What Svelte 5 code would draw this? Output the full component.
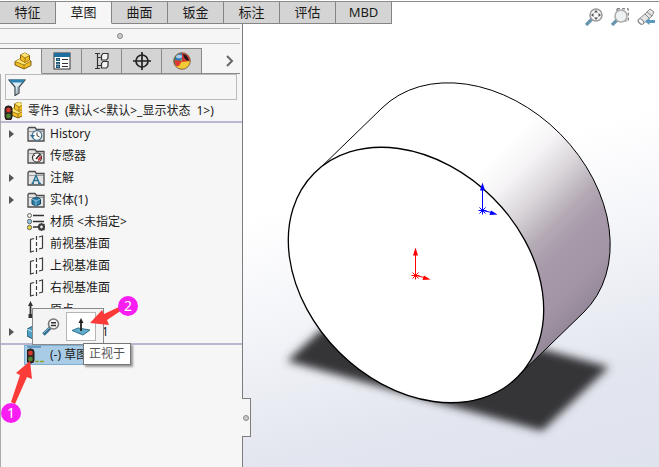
<script lang="ts">
  type Node = { icon: string; label: string; open?: boolean };

  const ribbon = ['特征', '草图', '曲面', '钣金', '标注', '评估', 'MBD'];
  const managers = [
    { id: 'part', title: '设计树' },
    { id: 'props', title: '属性' },
    { id: 'config', title: '配置' },
    { id: 'target', title: '尺寸' },
    { id: 'ball', title: '外观' },
  ];
  const nodes: Node[] = [
    { icon: 'history', label: 'History', open: false },
    { icon: 'sensor', label: '传感器' },
    { icon: 'note', label: '注解', open: false },
    { icon: 'solid', label: '实体(1)', open: false },
    { icon: 'material', label: '材质 <未指定>' },
    { icon: 'plane', label: '前视基准面' },
    { icon: 'plane', label: '上视基准面' },
    { icon: 'plane', label: '右视基准面' },
    { icon: 'origin', label: '原点' },
    { icon: 'boss', label: '凸台-拉伸1', open: false },
  ];

  let activeRibbon = $state('草图');
  let activeManager = $state('part');
  let filter = $state('');
</script>

{#snippet partShape()}
  <path d="M1 9.500 L6.500 6.500 V3 L11 1 L15.500 3.500 V8 L17 9 V13.500 L10 17 L1 13Z" fill="#f0bd25" stroke="#7c5b0c" stroke-linejoin="round" />
  <path d="M6.500 3 L11 1 L15.500 3.500 L11 6Z M1 9.500 L6.500 6.500 V8 L11 10.500 L15.500 8 L17 9 L10 13Z" fill="#ffe573" />
  <path d="M6.500 3 L11 6 L15.500 3.500 M11 6 V10.500 M6.500 6.500 V8 L11 10.500 L15.500 8 M1 9.500 L10 13 L17 9 M10 13 V17" fill="none" stroke="#8d6a12" stroke-width=".8" />
{/snippet}

{#snippet lights()}
  <rect x="1" y="4" width="7" height="14" rx="3" fill="#3a2a25" stroke="#1d1816" />
  <circle cx="4.500" cy="8" r="2.300" fill="#d8382f" />
  <circle cx="4.500" cy="14" r="2.300" fill="#4d8a35" />
{/snippet}

{#snippet folder()}
  <path d="M1 16 V3.500 L2 2.500 H8 L9.500 4.500 H17 V16Z" fill="#e3e3e3" stroke="#4c4c4c" stroke-width="1.300" />
  <path d="M2 6.500 H16" stroke="#9c9c9c" />
{/snippet}

{#snippet glyph(name: string)}
  <svg class="icon" viewBox="0 0 18 18" aria-hidden="true">
    {#if name === 'part'}
      {@render partShape()}
    {:else if name === 'root'}
      <g transform="translate(4 -1)">{@render partShape()}</g>
      {@render lights()}
    {:else if name === 'props'}
      <rect x="1" y="1" width="16" height="16" fill="#fff" stroke="#333" />
      <path d="M1 3 H17" stroke="#1e6f9f" stroke-width="4" />
      <g fill="#4aa3cf" stroke="#24566f">
        <rect x="3.500" y="6.500" width="3" height="2" /><rect x="3.500" y="10.500" width="3" height="1.500" /><rect x="3.500" y="13.500" width="3" height="2" />
      </g>
      <path d="M9 7.500 H15 M9 11.500 H15 M9 14.500 H15" stroke="#333" />
    {:else if name === 'config'}
      <path d="M4.500 1 V17 M2 1.500 H7 M2 16.500 H7 M5 5.500 H10 M5 13.500 H10" fill="none" stroke="#333" stroke-width="1.200" />
      <path d="M8.500 3.500 L10 1.500 H15 V6 L13.500 8 H8.500Z M8.500 11.500 L10 9.500 H15 V14 L13.500 16 H8.500Z" fill="#f4f4f4" stroke="#333" stroke-width="1.200" />
    {:else if name === 'target'}
      <circle cx="9" cy="9" r="6" fill="none" stroke="#222" stroke-width="1.700" />
      <path d="M9 0 V18 M0 9 H18" stroke="#222" stroke-width="1.700" />
    {:else if name === 'ball'}
      <circle cx="9" cy="9" r="8.300" fill="#f1c933" />
      <path d="M9 9 L3 3.500 A8 8 0 0 0 2 13Z" fill="#3c8f45" />
      <path d="M3 3.500 A8 8 0 0 1 9 1 L11 7 L2 9Z" fill="#3378bd" />
      <path d="M9 1 A8 8 0 0 1 17 9 L9 10Z" fill="#d33831" />
      <path d="M1 8 L9 9 L6 14 L3 14Z" fill="#df3b35" />
      <path d="M10 2 Q15 3 16 9 Q11 8 10 2Z" fill="#201820" />
      <ellipse cx="6" cy="4.500" rx="3" ry="1.800" fill="#d5ecf8" opacity=".75" />
      <circle cx="9" cy="9" r="8.300" fill="none" stroke="#6e4933" stroke-width=".8" />
    {:else if name === 'filter'}
      <path d="M1 2 H17 L11 9 V15 L7 17.500 V9Z" fill="#dcedf6" stroke="#39444b" stroke-width="1.200" />
      <path d="M1 1.500 H17 L15 4.500 H3Z" fill="#2f83b2" />
      <path d="M9 9 L14 5 L10 9 V15 L8 16Z" fill="#a8b7bf" />
    {:else if name === 'history'}
      {@render folder()}
      <circle cx="10" cy="10.500" r="4.800" fill="#fff" stroke="#43728f" stroke-width="1.200" />
      <path d="M10 7.500 V10.500 L12.500 12" fill="none" stroke="#333" />
      <path d="M3 10 L5.500 13 L8 10Z" fill="#286d98" />
    {:else if name === 'sensor'}
      {@render folder()}
      <circle cx="10" cy="10.500" r="4.500" fill="#fff" stroke="#333" stroke-width="1.200" />
      <path d="M9 12 L13 7.500" stroke="#222" stroke-width="1.500" />
      <path d="M11 13 Q13.500 12 13.500 9.500" fill="none" stroke="#d83737" stroke-width="2" />
      <path d="M6.500 9 L8 8" stroke="#333" />
    {:else if name === 'note'}
      {@render folder()}
      <path d="M5.500 14.500 L9 6.500 L12.500 14.500 M7 11.500 H11 M4.500 14.500 H7 M11 14.500 H14" fill="none" stroke="#287092" stroke-width="1.400" />
    {:else if name === 'solid'}
      {@render folder()}
      <path d="M5 8 L9.500 6 L13.500 8 V13 L9 15 L5 13Z" fill="#2d7fa9" stroke="#16465f" />
      <path d="M5 8 L9 10 L13.500 8 M9 10 V15" fill="none" stroke="#a7d3e6" stroke-width=".8" />
    {:else if name === 'material'}
      <path d="M6 2.500 H17 M6 8.500 H17 M6 14 H11" stroke="#333" stroke-width="1.500" />
      <g stroke="#666">
        <circle cx="2.500" cy="2.500" r="2" fill="#f1eee5" /><circle cx="2.500" cy="8.500" r="2.200" fill="#8cc6e9" /><circle cx="2.500" cy="14.500" r="2.200" fill="#ecd43b" />
      </g>
      <circle cx="14.500" cy="14" r="2.500" fill="#eee" stroke="#3d3d3d" stroke-width="2.200" />
      <path d="M14.500 10 V11 M14.500 17 V18 M10.500 14 H12 M17 14 H18 M12 11 L13 12 M16 16 L17.500 17 M17.500 11 L16 12 M12 17 L13 16" stroke="#3d3d3d" stroke-width="1.500" />
    {:else if name === 'plane'}
      <path d="M3.500 4.500 V17 L15.500 13 V1Z" fill="#fbfbfb" />
      <path d="M7 16 L3.500 17 V4.500 L7 3.500 M12 2 L15.500 1 V13 L12 14" fill="none" stroke="#3c3c3c" stroke-width="1.200" />
      <path d="M9.500 1 V18" stroke="#3c3c3c" stroke-width="1.200" stroke-dasharray="4 2" />
    {:else if name === 'origin'}
      <path d="M3.500 4 V15" stroke="#333" stroke-width="1.800" />
      <path d="M3.500 0 L6 5 H1Z M1.500 13 H6 V17 H1.500Z" fill="#333" />
    {:else if name === 'boss'}
      <path d="M0 6 L6 3 L12 6 V13 L6 16 L0 13Z" fill="#4f9fc2" stroke="#295a70" />
      <path d="M0 6 L6 9 V16 M6 9 L12 6" fill="none" stroke="#d3ecf5" />
    {:else if name === 'sketch'}
      <g transform="translate(-1 -1)">{@render lights()}</g>
      <path d="M8 15.500 H18" stroke="#8fa533" stroke-width="1.500" stroke-dasharray="4 1" />
      <path d="M0 1 H14" stroke="#276aa1" />
    {:else if name === 'lens'}
      <path d="M8 10 L1.500 16.500" stroke="#37708f" stroke-width="3.500" />
      <path d="M7 10 L2 15" stroke="#80b9d4" stroke-width="1" />
      <circle cx="11.500" cy="6" r="5" fill="#f8f8f8" stroke="#777" stroke-width="1.600" />
      <path d="M9 4.800 H14 M9 7.500 H14" stroke="#333" stroke-width="1.400" />
    {:else if name === 'normal'}
      <path d="M0 12.500 L6 10 L18 12 L11 17Z" fill="#63adcc" stroke="#32718f" />
      <path d="M9 13 V3" stroke="#222" stroke-width="1.800" />
      <path d="M9 0 L11.500 5 H6.500Z" fill="#222" />
    {:else if name === 'fit'}
      <path d="M7 11 L1 17" stroke="#6795ad" stroke-width="3.300" />
      <circle cx="11" cy="7" r="6" fill="#f7f7f7" stroke="#9a9a9a" stroke-width="1.500" />
      <path d="M11 2 L13 4.500 H9Z M11 12 L13 9.500 H9Z M6 7 L8.500 5 V9Z M16 7 L13.500 5 V9Z" fill="#555" />
    {:else if name === 'area'}
      <path d="M6 .8 H17.200 V13 H14 M6 .8 V3" fill="none" stroke="#555" stroke-dasharray="3 2" />
      <path d="M6 12 L1 17" stroke="#6795ad" stroke-width="3.300" />
      <circle cx="10" cy="8" r="6" fill="#eef1f2" stroke="#aaa" stroke-width="1.500" />
    {:else if name === 'previous'}
      <path d="M1 12 L10 4 L13 1 L17 4 L15 8 L6 16 Q1 17 1 12Z" fill="#e4e4e4" stroke="#888" />
      <path d="M8 6 L12 10 M10 4 L15 8" stroke="#888" />
      <ellipse cx="4" cy="13.500" rx="3.200" ry="2" fill="#fff" stroke="#888" transform="rotate(45 4 13.500)" />
      <path d="M8 13.500 L12.500 10 V12 H18 V15 H12.500 V17Z" fill="#5b9abd" />
    {/if}
  </svg>
{/snippet}

{#snippet triad(x: number, y: number, color: string)}
  <g transform="translate({x} {y})" stroke={color} fill={color}>
    <path d="M0 0 V-21 M0 0 L9 2 M-4 0 H4 M0 -4 V4 M-3 -3 L3 3 M-3 3 L3 -3" />
    <path d="M0 -28 L2.500 -20 H-2.500Z M15 4 L7 4.500 L8.500 0Z" stroke="none" />
  </g>
{/snippet}

<div class="app">
  <nav class="ribbon">
    {#each ribbon as tab}
      <button class:active={tab === activeRibbon} onclick={() => (activeRibbon = tab)}>{tab}</button>
    {/each}
  </nav>

  <div class="tools">
    <button aria-label="整屏显示全图">{@render glyph('fit')}</button>
    <button aria-label="局部放大">{@render glyph('area')}</button>
    <button aria-label="上一视图">{@render glyph('previous')}</button>
  </div>

  <div class="workspace">
    <aside class="panel">
      <div class="grip"><span class="dot"></span></div>
      <div class="managers">
        {#each managers as m}
          <button class:active={m.id === activeManager} aria-label={m.title} onclick={() => (activeManager = m.id)}>
            {@render glyph(m.id)}
          </button>
        {/each}
        <button class="more" aria-label="更多">
          <svg viewBox="0 0 8 12" aria-hidden="true"><path d="M1 1 L6 6 L1 11" fill="none" stroke="#666" stroke-width="2" /></svg>
        </button>
      </div>

      <div class="tree">
        <label class="filter">
          {@render glyph('filter')}
          <input type="text" aria-label="过滤" bind:value={filter} />
        </label>
        <div class="root">
          {@render glyph('root')}
          <span>零件3</span>
          <span>(默认&lt;&lt;默认&gt;_显示状态</span>
          <span>1&gt;)</span>
        </div>
        <ul>
          {#each nodes as node}
            <li>
              <span class="expander">
                {#if node.open !== undefined}
                  <button aria-label="展开 {node.label}"></button>
                {/if}
              </span>
              {@render glyph(node.icon)}
              <span>{node.label}</span>
            </li>
          {/each}
        </ul>
        <div class="rollback"></div>
        <div class="selected">
          {@render glyph('sketch')}
          <span>(-) 草图1</span>
          <div class="context">
            <button aria-label="放大所选范围">{@render glyph('lens')}</button>
            <button class="hover" aria-label="正视于">{@render glyph('normal')}</button>
          </div>
          <div class="tooltip" role="tooltip">正视于</div>
        </div>
      </div>

      <button class="handle" aria-label="折叠面板"><span class="dot"></span></button>
    </aside>

    <main class="viewport">
      <svg viewBox="243 24 416 443" preserveAspectRatio="xMidYMid meet" role="img" aria-label="圆柱">
        <defs>
          <linearGradient id="side" gradientUnits="userSpaceOnUse" x1="325" y1="325" x2="455" y2="455">
            <stop offset="0" stop-color="#fff" />
            <stop offset=".15" stop-color="#f6f4f6" />
            <stop offset=".32" stop-color="#d9d5d9" />
            <stop offset=".5" stop-color="#b3a9b4" />
            <stop offset=".62" stop-color="#a799a9" />
            <stop offset=".8" stop-color="#a395a6" />
            <stop offset="1" stop-color="#8f8594" />
          </linearGradient>
          <filter id="soft" x="-10%" y="-20%" width="120%" height="140%">
            <feGaussianBlur stdDeviation="4" />
          </filter>
        </defs>
        <path d="M322 329 L287 361 L542 431 L609 367 L520 343Z" fill="#353637" filter="url(#soft)" />
        <path d="M315 173 L382 108 A143 108 45 0 1 584 312 L517 377Z" fill="url(#side)" stroke="#000" />
        <ellipse cx="416" cy="275" rx="144" ry="109" transform="rotate(45 416 275)" fill="#fff" stroke="#000" stroke-width="1.300" />
        {@render triad(415.5, 275.5, '#f00')}
        {@render triad(482.5, 210.5, '#00f')}
      </svg>
    </main>
  </div>

  <svg class="callouts" viewBox="0 0 150 430" aria-hidden="true">
    <g fill="#fb3b38">
      <path d="M30 361 L32 379 L27 377 L15 404 L11 402 L20 375 L16 373Z" />
      <path d="M90 323 L102 310 L104 314 L121 306 L122 310 L107 320 L109 325Z" />
    </g>
    <g fill="#f81df0">
      <circle cx="11" cy="413" r="10" />
      <circle cx="128" cy="306" r="10" />
    </g>
    <text x="11" y="418">1</text>
    <text x="128" y="311">2</text>
  </svg>
</div>

<style>
  :global(body) {
    margin: 0;
  }

  .app {
    position: relative;
    display: flex;
    flex-direction: column;
    min-height: 100vh;
    background: #fff;
    color: #1b1b1b;
    font: 12px/16px "Noto Sans", "Noto Sans CJK SC", sans-serif;
  }

  button {
    padding: 0;
    border: 0;
    background: none;
    color: inherit;
    font: inherit;
  }

  .icon {
    display: block;
    flex: none;
    width: 18px;
    height: 18px;
  }

  .ribbon {
    display: flex;
    height: 22px;
    margin-top: 1px;
    border-top: 1px solid #8b8b8b;
  }

  .ribbon button {
    box-sizing: border-box;
    width: 56px;
    padding-bottom: 2px;
    border-right: 1px solid #858585;
    border-bottom: 1px solid #858585;
    background: #d4d4d4;
    font-size: 13px;
  }

  .ribbon button.active {
    border-bottom-color: #f6f6f6;
    background: #f6f6f6;
  }

  .tools {
    position: absolute;
    top: 8px;
    right: 4px;
    display: flex;
    gap: 8px;
  }

  .workspace {
    display: flex;
    flex: 1;
  }

  .panel {
    position: relative;
    box-sizing: border-box;
    display: flex;
    flex-direction: column;
    flex: none;
    width: 243px;
    border-right: 1px solid #7d7d7d;
    background: #f6f6f6;
  }

  .grip {
    display: flex;
    align-items: center;
    justify-content: center;
    height: 14px;
    margin: 4px 2px 4px 0;
    border-top: 1px solid #b5b5b5;
    border-bottom: 1px solid #b5b5b5;
  }

  .dot {
    box-sizing: border-box;
    width: 6px;
    height: 6px;
    border: 1px solid #888;
    border-radius: 50%;
    background: #ccc;
  }

  .managers {
    display: flex;
    height: 26px;
    margin-right: 2px;
  }

  .managers button {
    display: flex;
    box-sizing: border-box;
    align-items: center;
    justify-content: center;
    width: 40px;
    border: 1px solid #8a8a8a;
    border-left: 0;
    background: #d4d4d4;
  }

  .managers button.active {
    width: 42px;
    padding-left: 4px;
    border-bottom-color: #f6f6f6;
    background: #f6f6f6;
  }

  .managers .more {
    flex: 1;
    justify-content: flex-end;
    padding-right: 6px;
    border-width: 0 0 1px;
    background: none;
  }

  .more svg {
    width: 8px;
    height: 12px;
  }

  .tree {
    flex: 1;
    border-left: 1px solid #aaa;
  }

  .filter {
    display: flex;
    align-items: center;
    height: 24px;
    margin: 0 5px 0 4px;
    padding-left: 2px;
    border: 1px solid #bbb;
  }

  .filter input {
    flex: 1;
    min-width: 0;
    border: 0;
    outline: 0;
    background: none;
    font: inherit;
  }

  .root {
    display: flex;
    align-items: center;
    gap: 6px;
    height: 21px;
    padding-left: 3px;
    border-bottom: 2px solid #b9b8d0;
    white-space: nowrap;
  }

  ul {
    margin: 0;
    padding: 0;
    list-style: none;
  }

  li {
    display: flex;
    align-items: center;
    height: 22px;
    padding-left: 8px;
    white-space: pre;
  }

  li > span:last-child {
    margin-left: 5px;
  }

  .expander {
    display: flex;
    width: 18px;
  }

  .expander button {
    border: solid transparent;
    border-width: 4px 0 4px 5px;
    border-left-color: #555;
  }

  .rollback {
    height: 2px;
    background: #b9b8d0;
  }

  .selected {
    position: relative;
    box-sizing: border-box;
    display: flex;
    align-items: center;
    gap: 5px;
    width: 88px;
    height: 20px;
    margin-left: 23px;
    padding-left: 2px;
    border: 1px solid #7faed0;
    background: #a9cce6;
    white-space: nowrap;
  }

  .context {
    position: absolute;
    bottom: 19px;
    left: 7px;
    display: flex;
    padding: 3px 7px 3px 3px;
    border: 1px solid #8a8a8a;
    background: #f4f4f4;
  }

  .context button {
    display: flex;
    align-items: center;
    justify-content: center;
    width: 30px;
    height: 29px;
    border: 1px solid transparent;
  }

  .context .hover {
    border-color: #b5b5b5;
    background: #fff;
  }

  .tooltip {
    position: absolute;
    top: -3px;
    left: 58px;
    padding: 2px 5px;
    border: 1px solid #777;
    background: #fff;
    box-shadow: 2px 2px 2px #999;
    color: #555;
  }

  .handle {
    position: absolute;
    top: 374px;
    left: 242px;
    display: flex;
    align-items: center;
    justify-content: center;
    width: 9px;
    height: 39px;
    border: 1px solid #7d7d7d;
    border-left: 0;
    background: #f6f6f6;
  }

  .viewport {
    flex: 1;
    min-width: 0;
    background: linear-gradient(165deg, #fff 35%, #f4f5f9 55%, #e3e6ef 80%, #dfe3ed 100%);
  }

  .viewport svg {
    display: block;
    width: 100%;
    height: 100%;
  }

  .callouts {
    position: absolute;
    top: 0;
    left: 0;
    width: 150px;
    height: 430px;
    pointer-events: none;
  }

  .callouts text {
    fill: #fff;
    font-size: 14px;
    text-anchor: middle;
  }
</style>
